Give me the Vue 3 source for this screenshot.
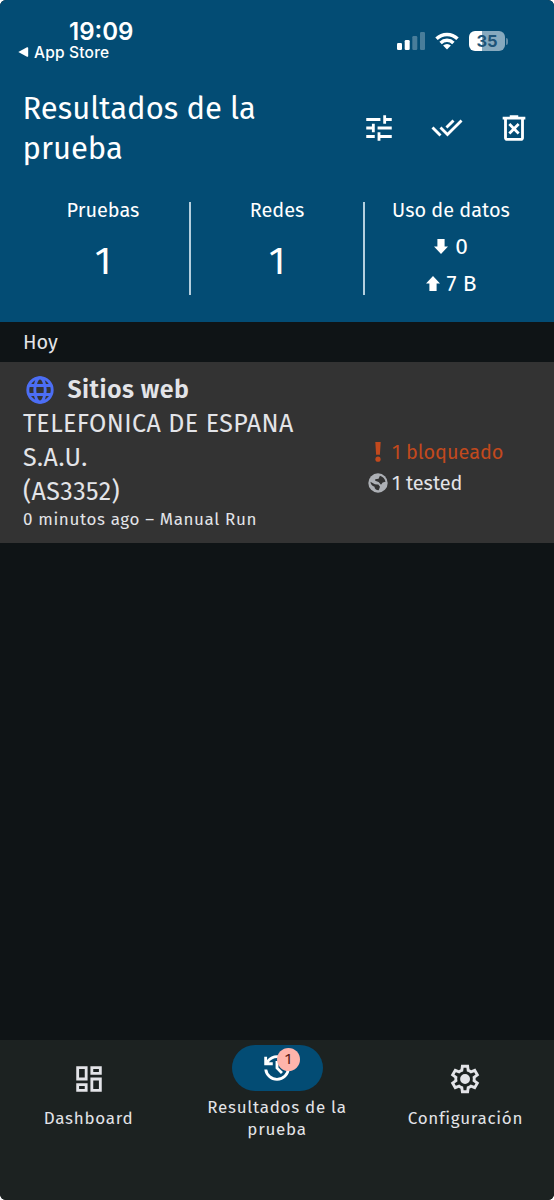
<template>
  <div class="screen">
    <header class="top">
      <!-- Status bar -->
      <div class="status">
        <div class="clock">
          <div class="time">19:09</div>
          <div class="back">
            <svg width="11" height="10" viewBox="0 0 11 10"><path d="M0.3 5 9 .3q1.2-.4 1.2.8v7.8q0 1.2-1.2.8Z" fill="currentColor" /></svg>
            <span>App Store</span>
          </div>
        </div>
        <div class="signals">
          <svg width="28" height="18" viewBox="0 0 28 18" fill="currentColor">
            <rect x="0" y="11" width="5" height="7" rx="1.3" />
            <rect x="7.7" y="8" width="5" height="10" rx="1.3" />
            <rect x="15.3" y="4" width="5" height="14" rx="1.3" opacity=".28" />
            <rect x="23" y="0" width="5" height="18" rx="1.3" opacity=".28" />
          </svg>
          <svg class="wifi" width="24" height="18" viewBox="0 0 24 18" fill="none" stroke="currentColor" stroke-width="3.5">
            <path d="M1.5 6.7a15 15 0 0 1 21 0" />
            <path d="M5.6 10.9a9.2 9.2 0 0 1 12.8 0" />
            <path d="M12 17.4 8.1 13.5a5.5 5.5 0 0 1 7.8 0Z" fill="currentColor" stroke="none" />
          </svg>
          <div class="battery">35</div>
          <div class="battery-tip"></div>
        </div>
      </div>

      <div class="title-row">
        <h1 class="title">Resultados de la<br />prueba</h1>
        <div class="actions">
          <svg v-for="icon in actions" :key="icon" class="icon" viewBox="0 -960 960 960"><path :d="icon" /></svg>
        </div>
      </div>

      <!-- Totals -->
      <div class="totals">
        <div class="total">
          <div class="label">Pruebas</div>
          <div class="number">1</div>
        </div>
        <div class="total">
          <div class="label">Redes</div>
          <div class="number">1</div>
        </div>
        <div class="total">
          <div class="label">Uso de datos</div>
          <div class="usage">
            <svg width="14" height="15" viewBox="0 0 14 15"><path d="M3.4 0h7.2v7.5H14L7 15 0 7.5h3.4Z" fill="currentColor" /></svg>
            <span>0</span>
          </div>
          <div class="usage">
            <svg width="14" height="15" viewBox="0 0 14 15"><path d="M3.4 15h7.2V7.5H14L7 0 0 7.5h3.4Z" fill="currentColor" /></svg>
            <span>7 B</span>
          </div>
        </div>
      </div>
    </header>

    <div class="day">Hoy</div>

    <article class="result">
      <div class="info">
        <div class="test">
          <svg class="globe" width="28" height="28" viewBox="0 0 28 28" fill="none" stroke="currentColor" stroke-width="2.9">
            <circle cx="14" cy="14" r="12.2" />
            <ellipse cx="14" cy="14" rx="5.2" ry="12.2" />
            <path d="M2.5 9.5h23M2.5 18.5h23" />
          </svg>
          <strong>Sitios web</strong>
        </div>
        <div class="network">
          TELEFONICA DE ESPANA<br />
          S.A.U.<br />
          (AS3352)
        </div>
        <div class="when">0 minutos ago – Manual Run</div>
      </div>
      <div class="counts">
        <div class="count blocked">
          <svg width="20" height="20" viewBox="0 0 20 20" fill="currentColor"><path d="M7.3 0h5.4l-.8 12.8H8.1Z" /><circle cx="10" cy="17.2" r="2.6" /></svg>
          <span>1 bloqueado</span>
        </div>
        <div class="count">
          <!-- Earth: light disc with two dark continents -->
          <svg width="20" height="20" viewBox="0 0 20 20">
            <circle cx="10" cy="10" r="9.7" fill="#adb0b5" />
            <path d="M2.4 8.8 5.5 10.6q1.200 1.100 4.800.9l1.700 2.200-1.300 3.600q-4-.3-4.200-3.500-3.600-1-4.100-5Z" fill="#333" />
            <path d="M7.2 7.8V6.300l3.400-.6 1.300-3q4.800 1.500 5.600 6l-2.800.7-1.700 2.300-2.400-2.600Z" fill="#333" />
          </svg>
          <span>1 tested</span>
        </div>
      </div>
    </article>

    <nav class="nav">
      <div v-for="tab in tabs" :key="tab.icon" class="tab" :class="{ active: tab.badge }">
        <div class="pill">
          <svg class="icon" viewBox="0 -960 960 960"><path :d="tab.icon" /></svg>
          <span v-if="tab.badge" class="badge">{{ tab.badge }}</span>
        </div>
        <div class="tab-label">{{ tab.label }}</div>
      </div>
    </nav>
  </div>
</template>

<script setup>
const tune = 'M440-120v-240h80v80h320v80H520v80h-80Zm-320-80v-80h240v80H120Zm160-160v-80H120v-80h160v-80h80v240h-80Zm160-80v-80h400v80H440Zm160-160v-240h80v80h160v80H680v80h-80Zm-480-80v-80h400v80H120Z'
const doneAll = 'M268-240 42-466l57-56 170 170 56 56-57 56Zm226 0L268-466l56-57 170 170 368-368 56 57-424 424Zm0-226-57-56 198-198 57 56-198 198Z'
const deleteForever = 'm376-300 104-104 104 104 56-56-104-104 104-104-56-56-104 104-104-104-56 56 104 104-104 104 56 56Zm-96 180q-33 0-56.5-23.5T200-200v-520h-40v-80h200v-40h240v40h200v80h-40v520q0 33-23.5 56.5T680-120H280Zm400-600H280v520h400v-520Z'
const actions = [tune, doneAll, deleteForever]

const dashboard = 'M520-600v-240h320v240H520ZM120-440v-400h320v400H120Zm400 320v-400h320v400H520Zm-400 0v-240h320v240H120Zm80-400h160v-240H200v240Zm400 320h160v-240H600v240Zm0-480h160v-80H600v80ZM200-200h160v-80H200v80Z'
const history = 'M480-120q-138 0-240.5-91.5T122-440h82q14 104 92.5 172T480-200q117 0 198.5-81.5T760-480q0-117-81.5-198.5T480-760q-69 0-129 32t-101 88h110v80H120v-240h80v94q51-64 124.5-99T480-840q75 0 140.5 28.5t114 77q48.5 48.5 77 114T840-480q0 75-28.5 140.5t-77 114q-48.5 48.5-114 77T480-120Zm112-192L440-464v-216h80v184l128 128-56 56Z'
const settings = 'm370-80-16-128q-13-5-24.5-12T307-235l-119 50L78-375l103-78q-1-7-1-13.5v-27q0-6.5 1-13.5L78-585l110-190 119 50q11-8 23-15t24-12l16-128h220l16 128q13 5 24.5 12t22.5 15l119-50 110 190-103 78q1 7 1 13.5v27q0 6.5-2 13.5l103 78-110 190-118-50q-11 8-23 15t-24 12L590-80H370Zm70-80h79l14-106q31-8 57.5-23.5T639-327l99 41 39-68-86-65q5-14 7-29.5t2-31.5q0-16-2-31.5t-7-29.5l86-65-39-68-99 42q-22-23-48.5-38.5T533-694l-13-106h-79l-14 106q-31 8-57.5 23.5T321-633l-99-41-39 68 86 64q-5 15-7 30t-2 32q0 16 2 31t7 30l-86 65 39 68 99-42q22 23 48.5 38.5T427-266l13 106Zm42-180q58 0 99-41t41-99q0-58-41-99t-99-41q-59 0-99.5 41T342-480q0 58 40.5 99t99.5 41Z'

const tabs = [
  { icon: dashboard, label: 'Dashboard' },
  { icon: history, label: 'Resultados de la prueba', badge: 1 },
  { icon: settings, label: 'Configuración' }
]
</script>

<style>
body {
  background: #fff;
}
</style>

<style scoped>
.screen {
  width: 554px;
  height: 1200px;
  display: flex;
  flex-direction: column;
  overflow: hidden;
  border-radius: 6px;
  background: #0f1416;
  color: #e3e4e8;
  font-family: "Fira Sans", "Noto Sans", sans-serif;
  white-space: nowrap;
}

svg {
  display: block;
  flex: none;
}

.top {
  height: 322px;
  box-sizing: border-box;
  background: #034c74;
  color: #fff;
}

.status {
  height: 80px;
  display: flex;
  justify-content: space-between;
  font-family: Inter, sans-serif;
}

.clock {
  padding: 19px 0 0 18px;
}

.time {
  height: 24px;
  line-height: 25px;
  padding-left: 51px;
  font-size: 24px;
  font-weight: 600;
}

.back {
  display: flex;
  align-items: center;
  gap: 5px;
  height: 18px;
  font-size: 15.5px;
  font-weight: 500;
  letter-spacing: 0.2px;
}

.signals {
  display: flex;
  height: 20px;
  padding: 31px 46px 0 0;
  align-items: center;
}

.wifi {
  margin: 0 10px;
}

.battery {
  width: 36px;
  height: 20px;
  border-radius: 6px;
  background: linear-gradient(90deg, #fff 36%, #86a9be 36%);
  color: #1d5478;
  font-size: 16.5px;
  font-weight: 700;
  line-height: 20px;
  text-align: center;
}

.battery-tip {
  width: 2px;
  height: 7px;
  margin-left: 1px;
  border-radius: 0 3px 3px 0;
  background: #5e8ba7;
}

.title-row {
  display: flex;
  justify-content: space-between;
  height: 96px;
  padding: 8px 23px 0;
}

.title {
  margin: 1px 0 0 -0.5px;
  font-size: 31px;
  font-weight: 400;
  line-height: 39.5px;
}

.actions {
  display: flex;
  gap: 33.5px;
  height: 80px;
  align-items: center;
}

.icon {
  width: 34px;
  height: 34px;
  fill: currentColor;
}

.totals {
  display: grid;
  grid-template-columns: repeat(3, 1fr);
  grid-template-rows: 93px;
  margin: 17.5px 17px 0 15px;
}

.total {
  text-align: center;
}

.total:first-child {
  padding-left: 2px;
}

.total + .total {
  border-left: 2px solid #b4cfde;
}

.label {
  height: 27px;
  line-height: 17px;
  font-size: 19.9px;
}

.number {
  font-size: 38.5px;
  line-height: 64px;
}

.usage {
  display: flex;
  justify-content: center;
  align-items: center;
  gap: 7px;
  height: 36.5px;
  font-size: 22.7px;
}

.day {
  height: 39.5px;
  padding-left: 23px;
  font-size: 19.9px;
  line-height: 40px;
}

.result {
  display: flex;
  height: 181px;
  background: #333;
}

.info {
  width: 345px;
  padding: 11.5px 0 0 23px;
  box-sizing: border-box;
}

.test {
  display: flex;
  align-items: center;
  gap: 14px;
  height: 34px;
  padding-left: 2.5px;
  font-size: 25px;
  letter-spacing: 0.42px;
}

.test strong {
  font-weight: 600;
}

.globe {
  color: #4c6ef5;
}

.network {
  font-size: 25px;
  line-height: 34px;
  letter-spacing: 0.42px;
}

.when {
  font-size: 17px;
  line-height: 22px;
  letter-spacing: 0.62px;
}

.counts {
  padding: 75px 0 0 22.5px;
}

.count {
  display: flex;
  align-items: center;
  gap: 4.5px;
  height: 31px;
  font-size: 19.9px;
}

.blocked {
  color: #c2491d;
}

.nav {
  display: flex;
  gap: 11.4px;
  height: 160px;
  margin-top: auto;
  background: #1c2221;
}

.tab {
  flex: 1;
  display: flex;
  flex-direction: column;
  align-items: center;
  padding-top: 16px;
}

.tab.active {
  padding-top: 5px;
}

.pill {
  position: relative;
  display: flex;
  align-items: center;
  justify-content: center;
  width: 91px;
  height: 46px;
  border-radius: 23px;
}

.active .pill {
  background: #034c74;
  color: #fff;
}

.badge {
  position: absolute;
  left: 45px;
  top: 3px;
  width: 23px;
  height: 23px;
  border-radius: 50%;
  background: #ffb4ab;
  color: #5b1a18;
  font-size: 15.5px;
  line-height: 23px;
  text-align: center;
}

.tab-label {
  width: 150px;
  margin-top: 5.5px;
  font-size: 17px;
  line-height: 22.5px;
  letter-spacing: 0.71px;
  text-align: center;
  white-space: normal;
}
</style>
